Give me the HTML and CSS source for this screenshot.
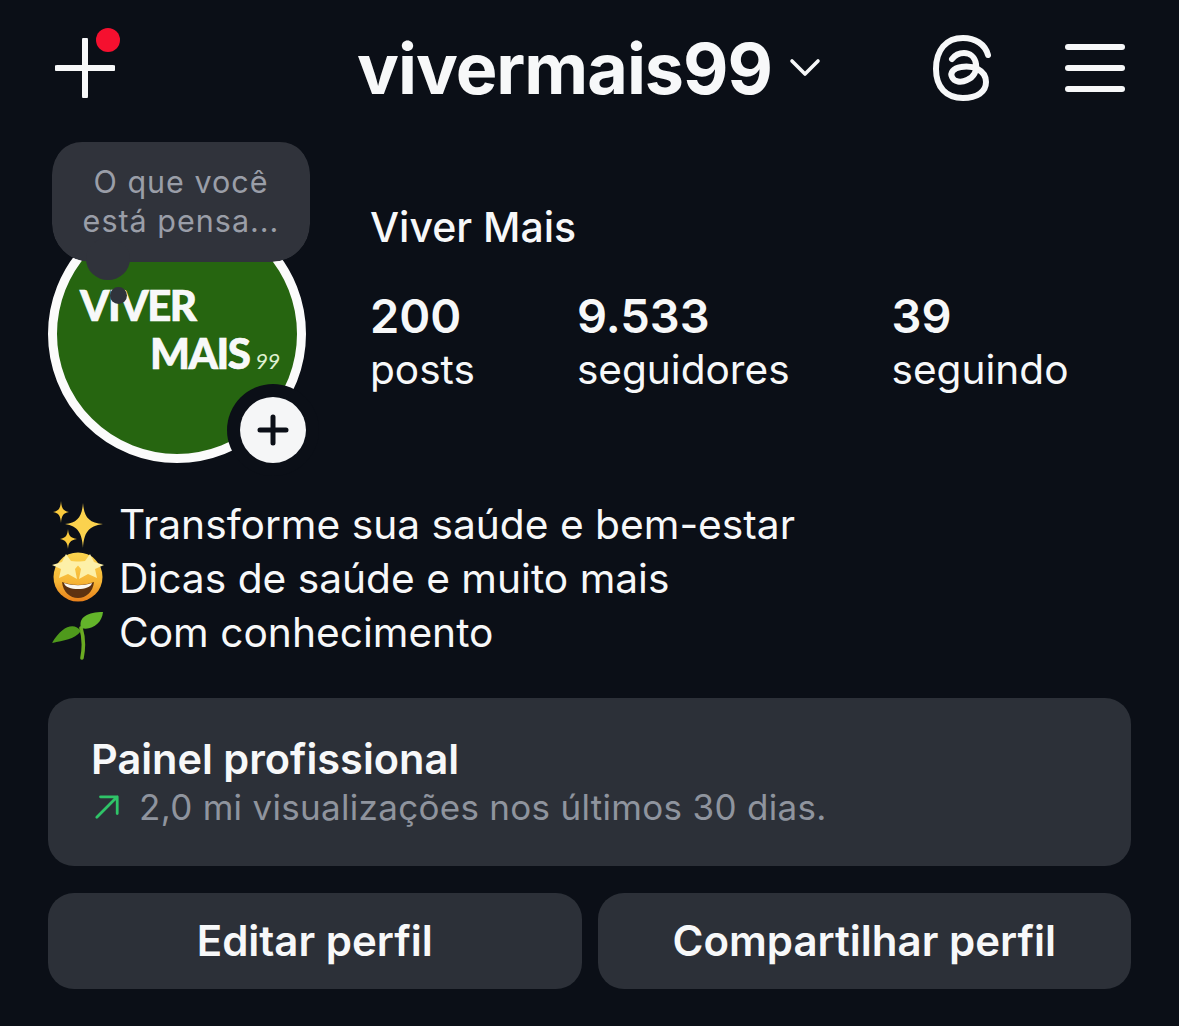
FILE: index.html
```html
<!DOCTYPE html>
<html lang="pt-BR">

<head>
    <meta charset="UTF-8">
    <meta name="viewport" content="width=device-width, initial-scale=1.0">
    <title>vivermais99</title>
    <link rel="stylesheet" href="styles.css">
</head>

<body>
    <header class="top-bar">
        <div class="new-post">
            <svg class="new-post-icon" viewBox="0 0 60 60" width="60" height="60">
                <path d="M30 2V58M2 30H58" fill="none" stroke="#f7f8f9" stroke-width="6" stroke-linecap="round" />
            </svg>
            <span class="red-dot"></span>
        </div>
        <div class="username">
            <span>vivermais99</span>
            <svg viewBox="0 0 32 20" width="32" height="20">
                <path d="M3 3L16 16L29 3" fill="none" stroke="#f7f8f9" stroke-width="3.6" stroke-linecap="round" stroke-linejoin="round" />
            </svg>
        </div>
        <div class="top-actions">
            <svg viewBox="30 12 64 72" width="64" height="72">
                <path d="M89 35C86 24 76 18 64 18C47 18 37 30 37 49C37 67 47 78 64 78C78 78 87 72 87 62C87 50 74 45 62 47C54 48 51 53 53 57C55 62 62 63 68 60C75 57 78 51 77 44C76 37 71 33 65 33C60 33 56 35 53 39" fill="none" stroke="#f7f8f9" stroke-width="6" stroke-linecap="round" />
            </svg>
            <div class="menu-icon"><span></span><span></span><span></span></div>
        </div>
    </header>

    <section class="profile-row">
        <div class="avatar-wrap">
            <div class="note">
                <div class="note-bubble">O que você<br>está pensa...</div>
                <div class="note-tail"></div>
                <div class="note-dot"></div>
            </div>
            <div class="avatar">
                <div class="logo-viver">VIVER</div>
                <div class="logo-mais">MAIS<small>99</small></div>
            </div>
            <div class="add-badge">
                <span class="add-circle">
                    <svg viewBox="0 0 32 32" width="32" height="32">
                        <path d="M16 3V29M3 16H29" fill="none" stroke="#0b0f17" stroke-width="5" stroke-linecap="round" />
                    </svg>
                </span>
            </div>
        </div>
        <div class="profile-info">
            <div class="display-name">Viver Mais</div>
            <div class="stats">
                <div class="stat"><strong>200</strong><span>posts</span></div>
                <div class="stat"><strong>9.533</strong><span>seguidores</span></div>
                <div class="stat"><strong>39</strong><span>seguindo</span></div>
            </div>
        </div>
    </section>

    <section class="bio">
        <div class="bio-line">
            <svg class="emoji" viewBox="10 8 54 54" width="54" height="54">
                <path d="M43 13C44 26 48 33 63 34C48 36 44 43 43 58C42 43 38 36 25 34C38 33 42 26 43 13Z" fill="#fbd24e" />
                <path d="M21 11C21.500 18 23 21 29 22C23 23 21.500 26 21 33C20.500 26 19 23 13 22C19 21 20.500 18 21 11Z" fill="#f9c93d" />
                <path d="M28 39C28.500 45 30 48 37 49C30 50 28.500 53 28 59C27.500 53 26 50 20 49C26 48 27.500 45 28 39Z" fill="#f9c93d" />
            </svg>
            <span>Transforme sua saúde e bem-estar</span>
        </div>
        <div class="bio-line">
            <svg class="emoji" viewBox="10 62 54 54" width="54" height="54">
                <defs>
                    <linearGradient id="faceFill" x1="0" y1="0" x2="0" y2="1">
                        <stop offset="0" stop-color="#fbd54f" />
                        <stop offset="0.6" stop-color="#f6b535" />
                        <stop offset="1" stop-color="#e9801a" />
                    </linearGradient>
                </defs>
                <circle cx="38" cy="87" r="24.500" fill="url(#faceFill)" />
                <path d="M22 92C32 96 44 96 54 92C53 102 46 108 38 108C30 108 23 102 22 92Z" fill="#5e3210" />
                <path d="M24 93C33 96 43 96 52 93C51 97 45 99 38 99C31 99 25 97 24 93Z" fill="#fbf8f0" />
                <path d="M26 64L31 71L41 72L35 79L37 89L28 84L19 88L21 79L12 75L22 72Z" fill="#fdf0a8" />
                <path d="M50 64L45 71L35 72L41 79L39 89L48 84L57 88L55 79L64 75L54 72Z" fill="#fdf0a8" />
            </svg>
            <span>Dicas de saúde e muito mais</span>
        </div>
        <div class="bio-line">
            <svg class="emoji" viewBox="10 116 54 54" width="54" height="54">
                <path d="M41 138C44 148 44 158 42 168" fill="none" stroke="#6bab22" stroke-width="3.600" stroke-linecap="round" />
                <path d="M41 141C34 132 22 136 12 153C24 150 34 150 41 141Z" fill="#4f9a1c" />
                <path d="M41 138C38 127 48 122 63 122C62 133 52 141 41 138Z" fill="#63b42a" />
            </svg>
            <span>Com conhecimento</span>
        </div>
    </section>

    <section class="panel">
        <div class="panel-title">Painel profissional</div>
        <div class="panel-sub">
            <svg viewBox="0 0 28 28" width="26" height="26">
                <path d="M3 25L25 3M7 3H25V21" fill="none" stroke="#2fc468" stroke-width="3" stroke-linecap="round" stroke-linejoin="round" />
            </svg>
            <span>2,0 mi visualizações nos últimos 30 dias.</span>
        </div>
    </section>

    <section class="buttons">
        <button type="button">Editar perfil</button>
        <button type="button">Compartilhar perfil</button>
    </section>
</body>

</html>
```

FILE: styles.css
```css
body {
    font-family: Inter, "Liberation Sans", sans-serif;
    background-color: #0b0f17;
    color: #f7f8f9;
    margin: 0;
    padding: 0 48px;
    height: 1026px;
    box-sizing: border-box;
    overflow: hidden;
}

.top-bar {
    display: flex;
    align-items: center;
    justify-content: space-between;
    height: 136px;
    padding: 0 6px 0 7px;
}

.new-post {
    position: relative;
    width: 60px;
    height: 60px;
}

.new-post-icon {
    display: block;
}

.red-dot {
    position: absolute;
    left: 41px;
    top: -10px;
    width: 24px;
    height: 24px;
    border-radius: 50%;
    background-color: #f5102f;
}

.username {
    display: flex;
    align-items: center;
    gap: 17px;
    font-size: 70px;
    font-weight: 700;
    letter-spacing: -1px;
    margin-left: 134px;
}

.top-actions {
    display: flex;
    align-items: center;
    gap: 72px;
}

.menu-icon {
    display: flex;
    flex-direction: column;
    gap: 15px;
    width: 60px;
}

.menu-icon span {
    height: 6px;
    border-radius: 3px;
    background-color: #f7f8f9;
}

.profile-row {
    display: flex;
    gap: 64px;
    height: 362px;
}

.avatar-wrap {
    position: relative;
    width: 258px;
    height: 327px;
    flex: none;
    display: flex;
    align-items: flex-end;
}

.avatar {
    width: 258px;
    height: 258px;
    box-sizing: border-box;
    border: 9px solid #fbfbfb;
    border-radius: 50%;
    background-color: #266510;
    padding: 67px 0 0 23px;
    font-family: Lato, sans-serif;
    font-weight: 900;
    font-size: 42px;
    line-height: 48px;
    letter-spacing: -1.5px;
    -webkit-text-stroke: 0.6px #fff;
}

.logo-mais {
    padding-left: 70px;
}

.logo-mais small {
    font-size: 22px;
    font-weight: 400;
    font-style: italic;
    margin-left: 6px;
    letter-spacing: -0.500px;
    color: #dff0d0;
    -webkit-text-stroke: 0;
}

.add-badge {
    position: absolute;
    left: 179px;
    bottom: -13px;
    padding: 13px;
    border-radius: 50%;
    background-color: #0b0f17;
    display: flex;
}

.add-circle {
    width: 66px;
    height: 66px;
    border-radius: 50%;
    background-color: #f5f6f7;
    display: flex;
    align-items: center;
    justify-content: center;
}

.note {
    position: absolute;
    left: 4px;
    top: 6px;
    z-index: 2;
}

.note-bubble {
    width: 258px;
    height: 125px;
    margin-top: -5px;
    padding-top: 25px;
    box-sizing: border-box;
    border-radius: 38px;
    background-color: #30333b;
    clip-path: inset(5px 0 0 0 round 30px 30px 38px 38px);
    color: #9a9ea8;
    font-size: 30.500px;
    line-height: 39px;
    letter-spacing: 1px;
    text-align: center;
}

.note-tail {
    position: absolute;
    left: 34px;
    top: 96px;
    width: 44px;
    height: 42px;
    border-radius: 50%;
    background-color: #30333b;
}

.note-dot {
    position: absolute;
    left: 58px;
    top: 145px;
    width: 17px;
    height: 17px;
    border-radius: 50%;
    background-color: #30333b;
}

.profile-info {
    padding-top: 66px;
}

.display-name {
    font-size: 41px;
    font-weight: 500;
    line-height: 50px;
}

.stats {
    display: flex;
    gap: 102px;
    margin-top: 37px;
}

.stat {
    display: flex;
    flex-direction: column;
}

.stat strong {
    font-size: 47px;
    font-weight: 600;
    line-height: 54px;
}

.stat span {
    font-size: 40.600px;
    line-height: 54px;
}

.bio {
    font-size: 40.700px;
    line-height: 54px;
}

.bio-line {
    display: flex;
    align-items: center;
    gap: 15px;
    height: 54px;
    margin-left: 2px;
}

.emoji {
    flex: none;
    width: 54px;
    height: 54px;
}

.panel {
    margin-top: 38px;
    height: 168px;
    box-sizing: border-box;
    padding: 34px 43px;
    border-radius: 26px;
    background-color: #2c3038;
}

.panel-title {
    font-size: 41.500px;
    font-weight: 600;
    line-height: 54px;
}

.panel-sub {
    display: flex;
    align-items: center;
    gap: 19px;
    padding-left: 3px;
    font-size: 35px;
    line-height: 42px;
    letter-spacing: 0.300px;
    color: #8f949e;
}

.buttons {
    display: flex;
    gap: 16px;
    margin-top: 27px;
}

button {
    flex: 1;
    height: 96px;
    padding: 0 0 2px;
    border: none;
    border-radius: 26px;
    background-color: #2c3038;
    color: #f7f8f9;
    font-family: inherit;
    font-size: 42px;
    font-weight: 600;
}
```
